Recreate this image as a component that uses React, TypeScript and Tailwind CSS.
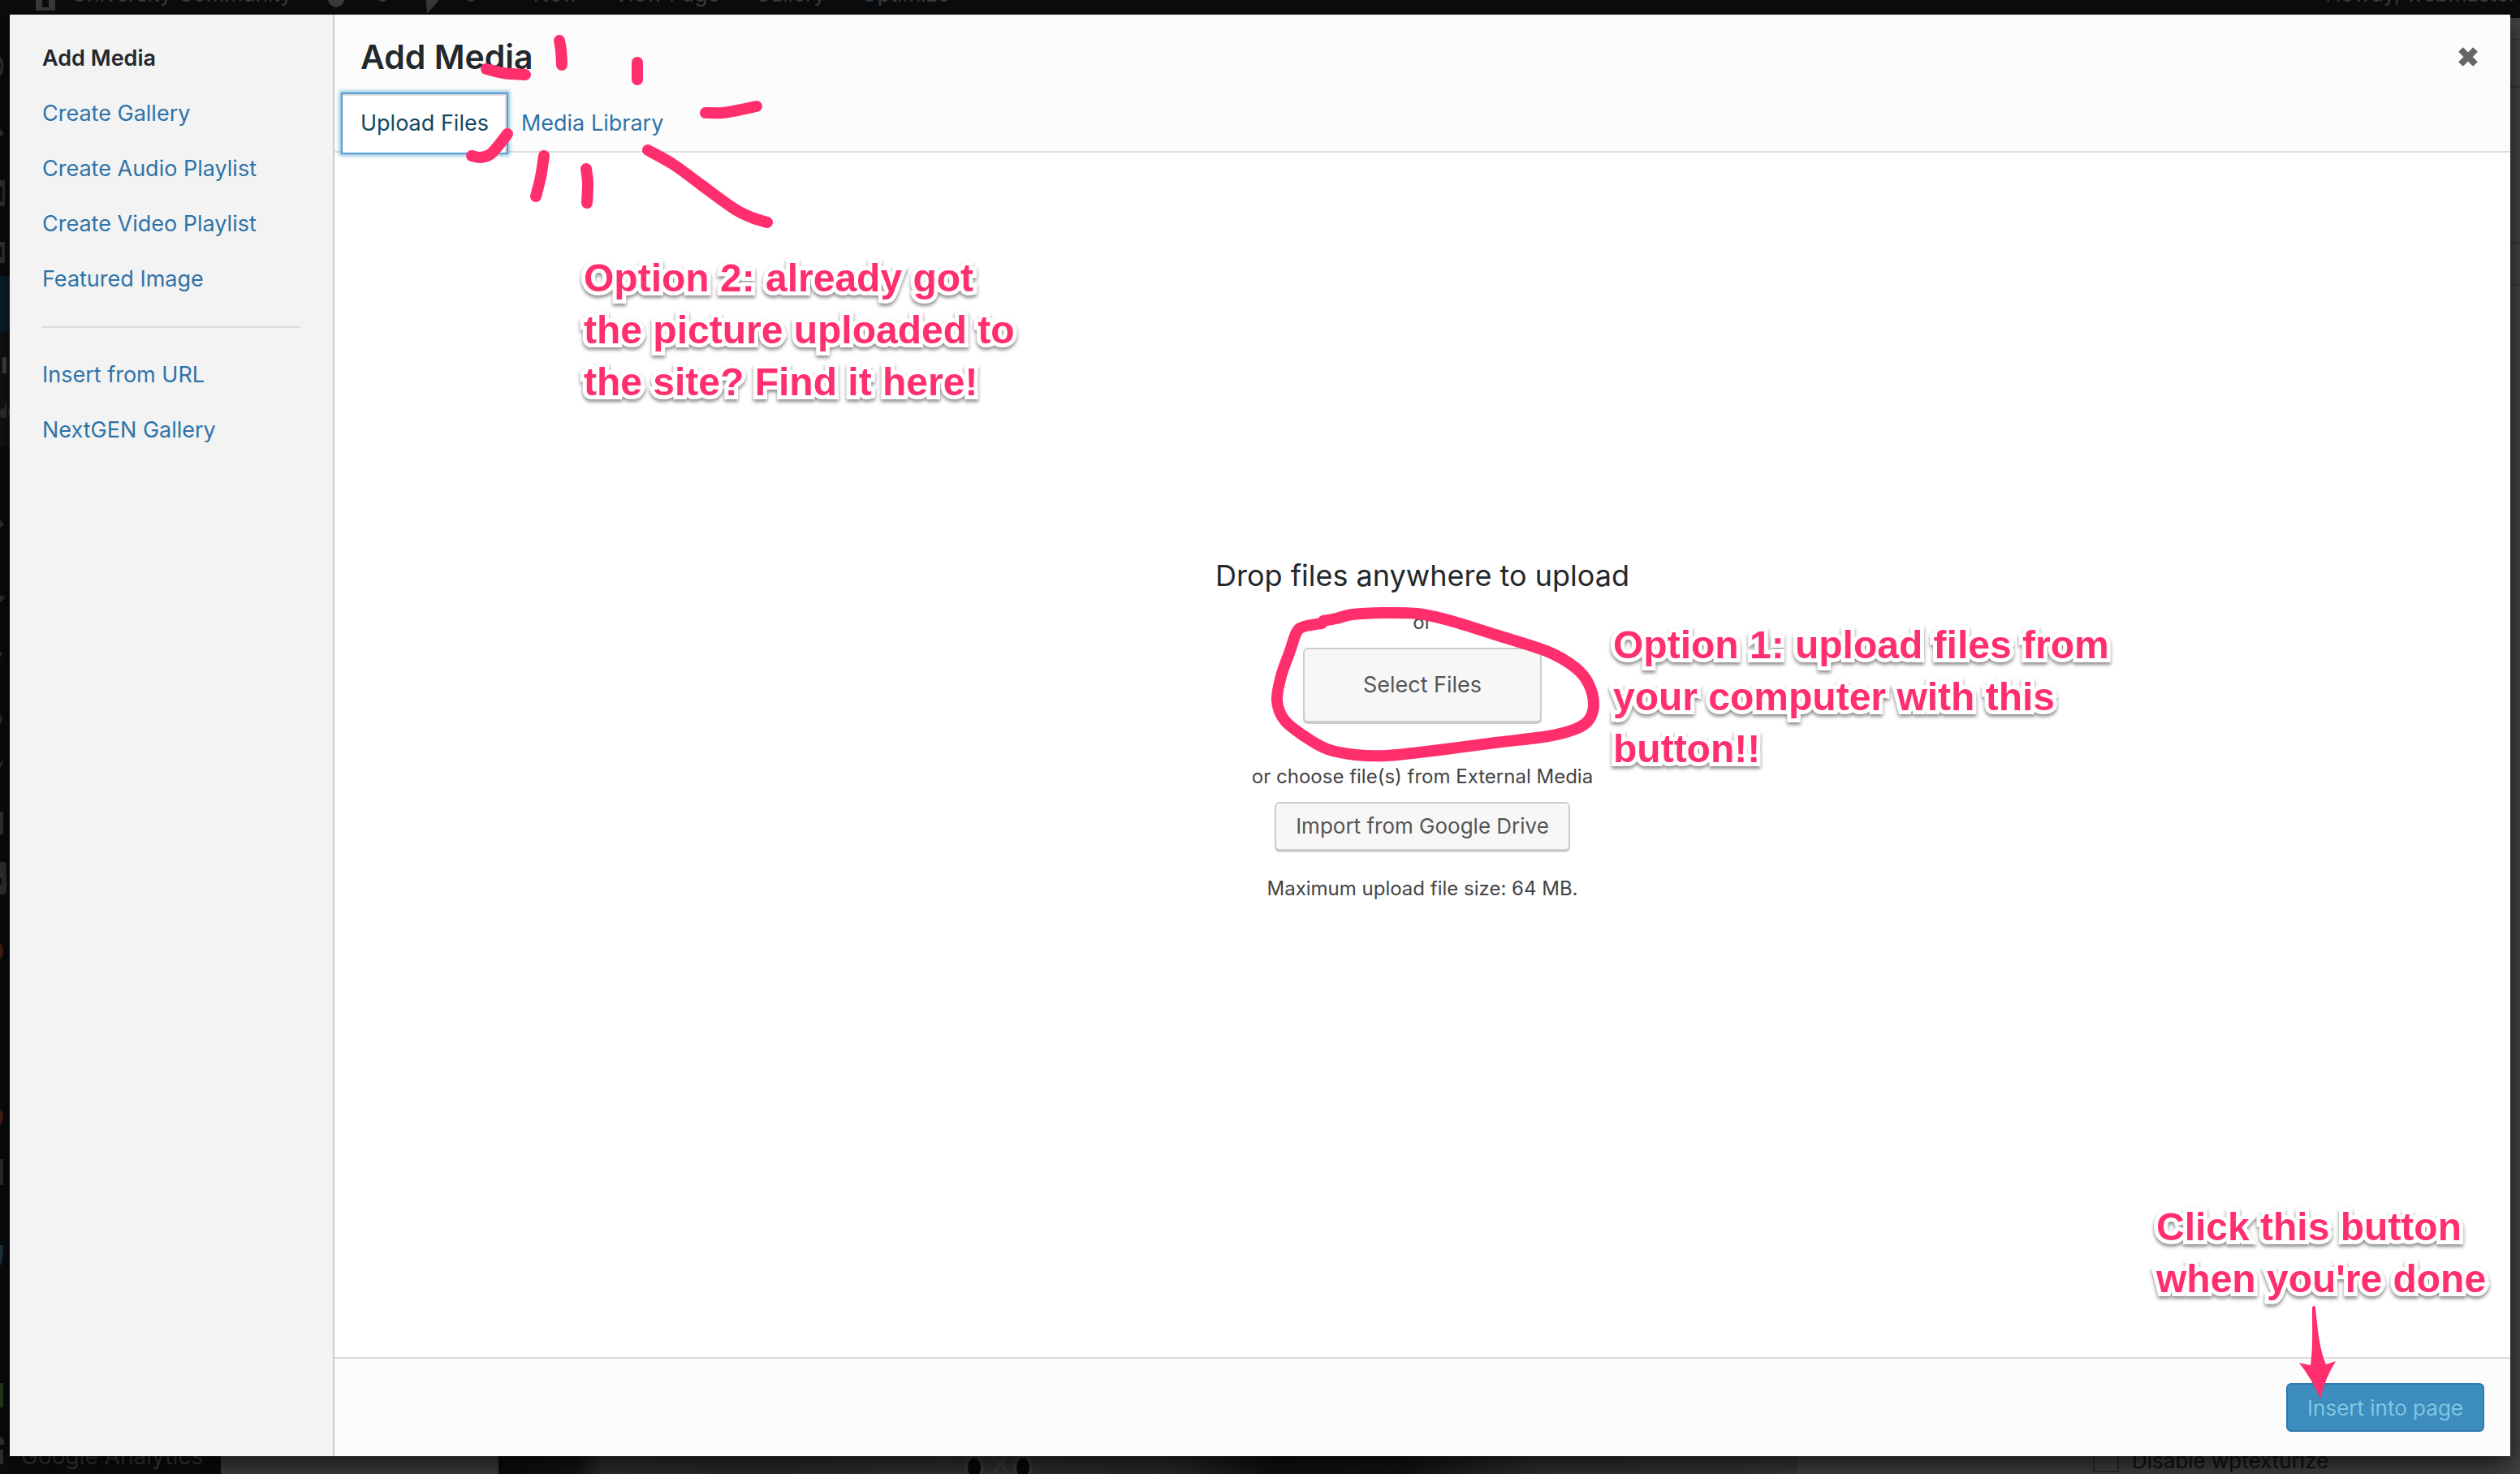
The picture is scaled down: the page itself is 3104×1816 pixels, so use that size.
import React from "react";

type Point = [number, number];

const INK = "#ff2f6d";

function smoothPath(points: Point[]): string {
  let d = `M${points[0][0]} ${points[0][1]}`;
  for (let i = 0; i < points.length - 1; i++) {
    const p0 = points[Math.max(i - 1, 0)];
    const p1 = points[i];
    const p2 = points[i + 1];
    const p3 = points[Math.min(i + 2, points.length - 1)];
    d += ` C${p1[0] + (p2[0] - p0[0]) / 6} ${p1[1] + (p2[1] - p0[1]) / 6} ${p2[0] - (p3[0] - p1[0]) / 6} ${p2[1] - (p3[1] - p1[1]) / 6} ${p2[0]} ${p2[1]}`;
  }
  return d;
}

const loop: Point[] = [
  [1630, 765], [1646, 762], [1666, 757], [1704, 755], [1746, 756], [1784, 764],
  [1842, 782], [1907, 803], [1941, 823], [1957, 843], [1963, 868], [1957, 887],
  [1941, 898], [1907, 907], [1842, 915], [1765, 925], [1708, 931], [1670, 930],
  [1635, 923], [1608, 908], [1582, 887], [1573, 863], [1578, 833], [1589, 802],
  [1597, 779], [1606, 772], [1628, 768],
];

const rays: Point[][] = [
  [[689, 50], [691, 62], [692, 80]],
  [[785, 77], [785, 98]],
  [[869, 139], [890, 139], [908, 136], [932, 131]],
  [[599, 85], [620, 90], [647, 92]],
  [[625, 165], [615, 178], [604, 190], [592, 194], [581, 192]],
  [[670, 192], [666, 218], [660, 242]],
  [[722, 208], [724, 226], [723, 250]],
  [[798, 185], [830, 203], [864, 228], [904, 257], [926, 268], [945, 274]],
];

function Ink() {
  return (
    <svg
      className="pointer-events-none absolute inset-0 h-full w-full"
      viewBox="0 0 3104 1816"
      fill="none"
      aria-hidden="true"
    >
      <g stroke={INK} strokeWidth="14" strokeLinecap="round" strokeLinejoin="round">
        {rays.map((r, i) => (
          <path key={i} d={smoothPath(r)} />
        ))}
        <path d={smoothPath(loop)} />
      </g>
      <path
        d="M2848 1611Q2850 1606 2852 1611C2855 1640 2857 1662 2865 1681L2877 1677Q2864 1698 2858 1723Q2847 1698 2832 1679L2846 1682C2849 1660 2848 1640 2848 1611Z"
        fill={INK}
      />
    </svg>
  );
}

function Note({ lines, className }: { lines: string[]; className: string }) {
  return (
    <p
      className={`absolute whitespace-nowrap font-['Liberation_Sans',sans-serif] text-[48px] font-bold leading-[64px] text-[#ff2f6d] [-webkit-text-stroke:10px_white] [paint-order:stroke_fill] [stroke-linejoin:round] drop-shadow-[0_3px_2px_rgba(0,0,0,0.45)] ${className}`}
    >
      {lines.map((l) => (
        <span key={l} className="block">
          {l}
        </span>
      ))}
    </p>
  );
}

const primary = ["Create Gallery", "Create Audio Playlist", "Create Video Playlist", "Featured Image"];
const secondary = ["Insert from URL", "NextGEN Gallery"];

function MenuLink({ children }: { children: React.ReactNode }) {
  return (
    <a href="#" className="block px-10 py-4 text-[27px] leading-9 text-[#2e73a8]">
      {children}
    </a>
  );
}

/* Right-hand edges of the admin menu icons. */
function MenuIcons() {
  return (
    <svg className="absolute left-0 top-0" width="12" height="1816" viewBox="0 0 12 1816" fill="#333436">
      <path d="M0 70Q4 72 4 82T0 94V88Q2 82 0 76ZM0 158L5 165L0 168Z" />
      <path d="M0 222H6V254H0V248H3V230H0ZM0 298H6V324H0V317H2V304H0Z" />
      <path d="M3 440H8V460H3Z" fill="#4a4744" />
      <path d="M6 496H8V516H6V514Q0 518 0 508Q2 500 6 504ZM12 502Q8 508 12 516Z" />
      <path d="M0 640L5 647L0 650ZM0 733L7 736L0 742ZM0 802L3 806L0 810ZM0 880L3 886L0 893Z" />
      <path d="M4 935Q3 942 0 946V941ZM0 1000H4V1028H0ZM0 1062H6Q8 1062 8 1066V1098Q8 1102 4 1102H0V1090H2V1082H0Z" />
      <path d="M0 1162Q4 1166 4 1172T0 1182ZM0 1366Q4 1370 4 1376T0 1386Z" fill="#4a2016" />
      <path d="M0 1428H4V1460H0Z" fill="#2b3035" />
      <path d="M0 1534H4Q4 1552 0 1560Z" fill="#1f3a44" />
      <path d="M0 1704H4V1734H0Z" fill="#2c3d18" />
      <path d="M0 1770Q6 1772 5 1780H0ZM0 1786H4V1804H0Z" />
    </svg>
  );
}

/* Dimmed admin screen that shows round the edges of the dialog. */
function Backdrop() {
  return (
    <div
      aria-hidden="true"
      className="absolute inset-0 flex flex-col overflow-hidden bg-[#444] text-[26px] leading-8 text-[#3a3b3c]"
    >
      <div className="relative h-[22px] shrink-0 overflow-hidden bg-[#0b0c0e]">
        <div className="absolute inset-x-0 bottom-[13px] flex justify-between pl-11 pr-1 whitespace-nowrap">
          <div className="flex items-end gap-11">
            <span className="flex items-end gap-5">
              <span className="h-6 w-6 translate-y-1 border-8 border-b-4 border-[#3a3b3c]" />
              University Community
            </span>
            <span className="flex items-end gap-10">
              <span className="h-5 w-5 rounded-full bg-[#3a3b3c]" />9
            </span>
            <span className="flex items-end gap-8">
              <svg width="16" height="24" viewBox="0 0 16 24" className="translate-y-2">
                <path d="M0 0h16v8L2 24Z" fill="#3a3b3c" />
              </svg>
              0
            </span>
            <span>+ New</span>
            <span>View Page</span>
            <span>Gallery</span>
            <span>Optimize</span>
          </div>
          <span>Howdy, webmaster</span>
        </div>
      </div>
      <div className="flex grow">
        <div className="w-[272px] bg-[#0b0c0e] pt-[318px]">
          <div className="h-[68px] bg-[#0d2130]" />
          <div className="h-[142px] bg-[#131415]" />
        </div>
        <div className="grow">
          <div className="mt-[26px] border-t-2 border-[#383838]" />
          <div className="mt-[56px] border-t-2 border-[#303238]" />
          <div className="mt-[190px] border-t-2 border-[#303238]" />
          <div className="mt-[50px] border-t-2 border-[#3b3b3b]" />
        </div>
      </div>
      <div className="flex h-11 shrink-0 items-end">
        <div className="h-full w-[272px] bg-[#0b0c0e] pl-[26px] pt-2 text-[28px] leading-7 text-[#3d3d3d]">
          Google Analytics
        </div>
        <div className="h-full w-[342px] bg-[#404040]" />
        <div className="h-full w-[1600px] bg-[linear-gradient(90deg,#0c0c0c_0%,#141414_6%,#303030_8%,#2b2b2b_20%,#333_34%,#2a2a2a_52%,#101010_60%,#151515_70%,#303030_80%,#383838_100%)]">
          <svg width="200" height="44" className="ml-[570px]">
            <g fill="#080808" stroke="#3a3a3a" strokeWidth="4">
              <ellipse cx="16" cy="36" rx="10" ry="14" />
              <ellipse cx="76" cy="36" rx="10" ry="14" />
              <path d="M38 20L58 44M56 20L40 44" />
            </g>
          </svg>
        </div>
        <div className="flex h-full grow items-start gap-4 bg-[#424242] pl-[364px] pt-3 text-[#111]">
          <span className="h-[30px] w-8 border-2 border-[#2c2c2c]" />
          <span className="leading-8">Disable wptexturize</span>
        </div>
      </div>
      <MenuIcons />
    </div>
  );
}

export default function App() {
  return (
    <div className="relative h-screen min-h-[1200px] overflow-hidden font-[Inter,sans-serif] text-[#444]">
      <Backdrop />

      <div
        role="dialog"
        aria-label="Add Media"
        className="absolute inset-x-3 top-[18px] bottom-[22px] flex bg-white shadow-[0_10px_30px_rgba(0,0,0,0.7)]"
      >
        <nav className="w-[400px] shrink-0 border-r-2 border-[#ccc] bg-[#f3f3f3] pt-5">
          <a href="#" aria-current="page" className="block px-10 py-4 text-[27px] font-semibold leading-9 text-[#23282d]">
            Add Media
          </a>
          {primary.map((t) => (
            <MenuLink key={t}>{t}</MenuLink>
          ))}
          <hr className="mx-10 my-6 border-t-2 border-[#ddd]" />
          {secondary.map((t) => (
            <MenuLink key={t}>{t}</MenuLink>
          ))}
        </nav>

        <main className="flex min-w-0 grow flex-col">
          <header className="h-[170px] shrink-0 border-b-2 border-[#ddd] bg-[#fcfcfc]">
            <div className="flex items-center justify-between pl-8 pr-10">
              <h1 className="text-[41px] font-semibold leading-[104px] tracking-normal text-[#23282d]">Add Media</h1>
              <button type="button" aria-label="Close">
                <svg width="24" height="24" viewBox="0 0 24 24" stroke="#666" strokeWidth="8">
                  <path d="M3 3L21 21M21 3L3 21" />
                </svg>
              </button>
            </div>
            <div role="tablist" className="-mt-2 flex pl-2 text-[27px] leading-9">
              <button
                type="button"
                role="tab"
                aria-selected="true"
                className="border-2 border-[#5b9dd9] bg-white px-[22px] py-[18px] text-[#124964] shadow-[inset_0_2px_0_#ddd,inset_-2px_0_0_#ddd,0_0_4px_2px_rgba(30,140,190,0.5)]"
              >
                Upload Files
              </button>
              <button type="button" role="tab" aria-selected="false" className="px-4 text-[#2e73a8]">
                Media Library
              </button>
            </div>
          </header>

          <section className="flex grow flex-col items-center justify-center pb-16 text-[24px] leading-[38px]">
            <h2 className="text-[36px] leading-[54px] text-[#23282d]">Drop files anywhere to upload</h2>
            <p className="mt-3">or</p>
            <button
              type="button"
              className="mt-3 h-[92px] rounded-md border-2 border-[#ccc] bg-[#f7f7f7] px-[72px] text-[27px] text-[#555] shadow-[0_2px_0_#ccc]"
            >
              Select Files
            </button>
            <p className="mt-12">or choose file(s) from External Media</p>
            <button
              type="button"
              className="mt-3 h-[60px] rounded-md border-2 border-[#ccc] bg-[#f7f7f7] px-6 text-[26px] text-[#555] shadow-[0_2px_0_#ccc]"
            >
              Import from Google Drive
            </button>
            <p className="mt-7">Maximum upload file size: 64 MB.</p>
          </section>

          <footer className="flex h-[122px] shrink-0 items-center justify-end border-t-2 border-[#ddd] bg-[#fcfcfc] px-8">
            <button
              type="button"
              className="h-[60px] rounded-md border-2 border-[#3079ad] bg-[#3d8dbf] px-6 text-[26px] text-[#7fc8e3] [text-shadow:0_-2px_0_rgba(0,0,0,0.1)]"
            >
              Insert into page
            </button>
          </footer>
        </main>
      </div>

      <Note className="left-[719px] top-[311px]" lines={["Option 2: already got", "the picture uploaded to", "the site? Find it here!"]} />
      <Note className="left-[1987px] top-[763px]" lines={["Option 1: upload files from", "your computer with this", "button!!"]} />
      <Note className="left-[2656px] top-[1480px]" lines={["Click this button", "when you're done"]} />
      <Ink />
    </div>
  );
}
